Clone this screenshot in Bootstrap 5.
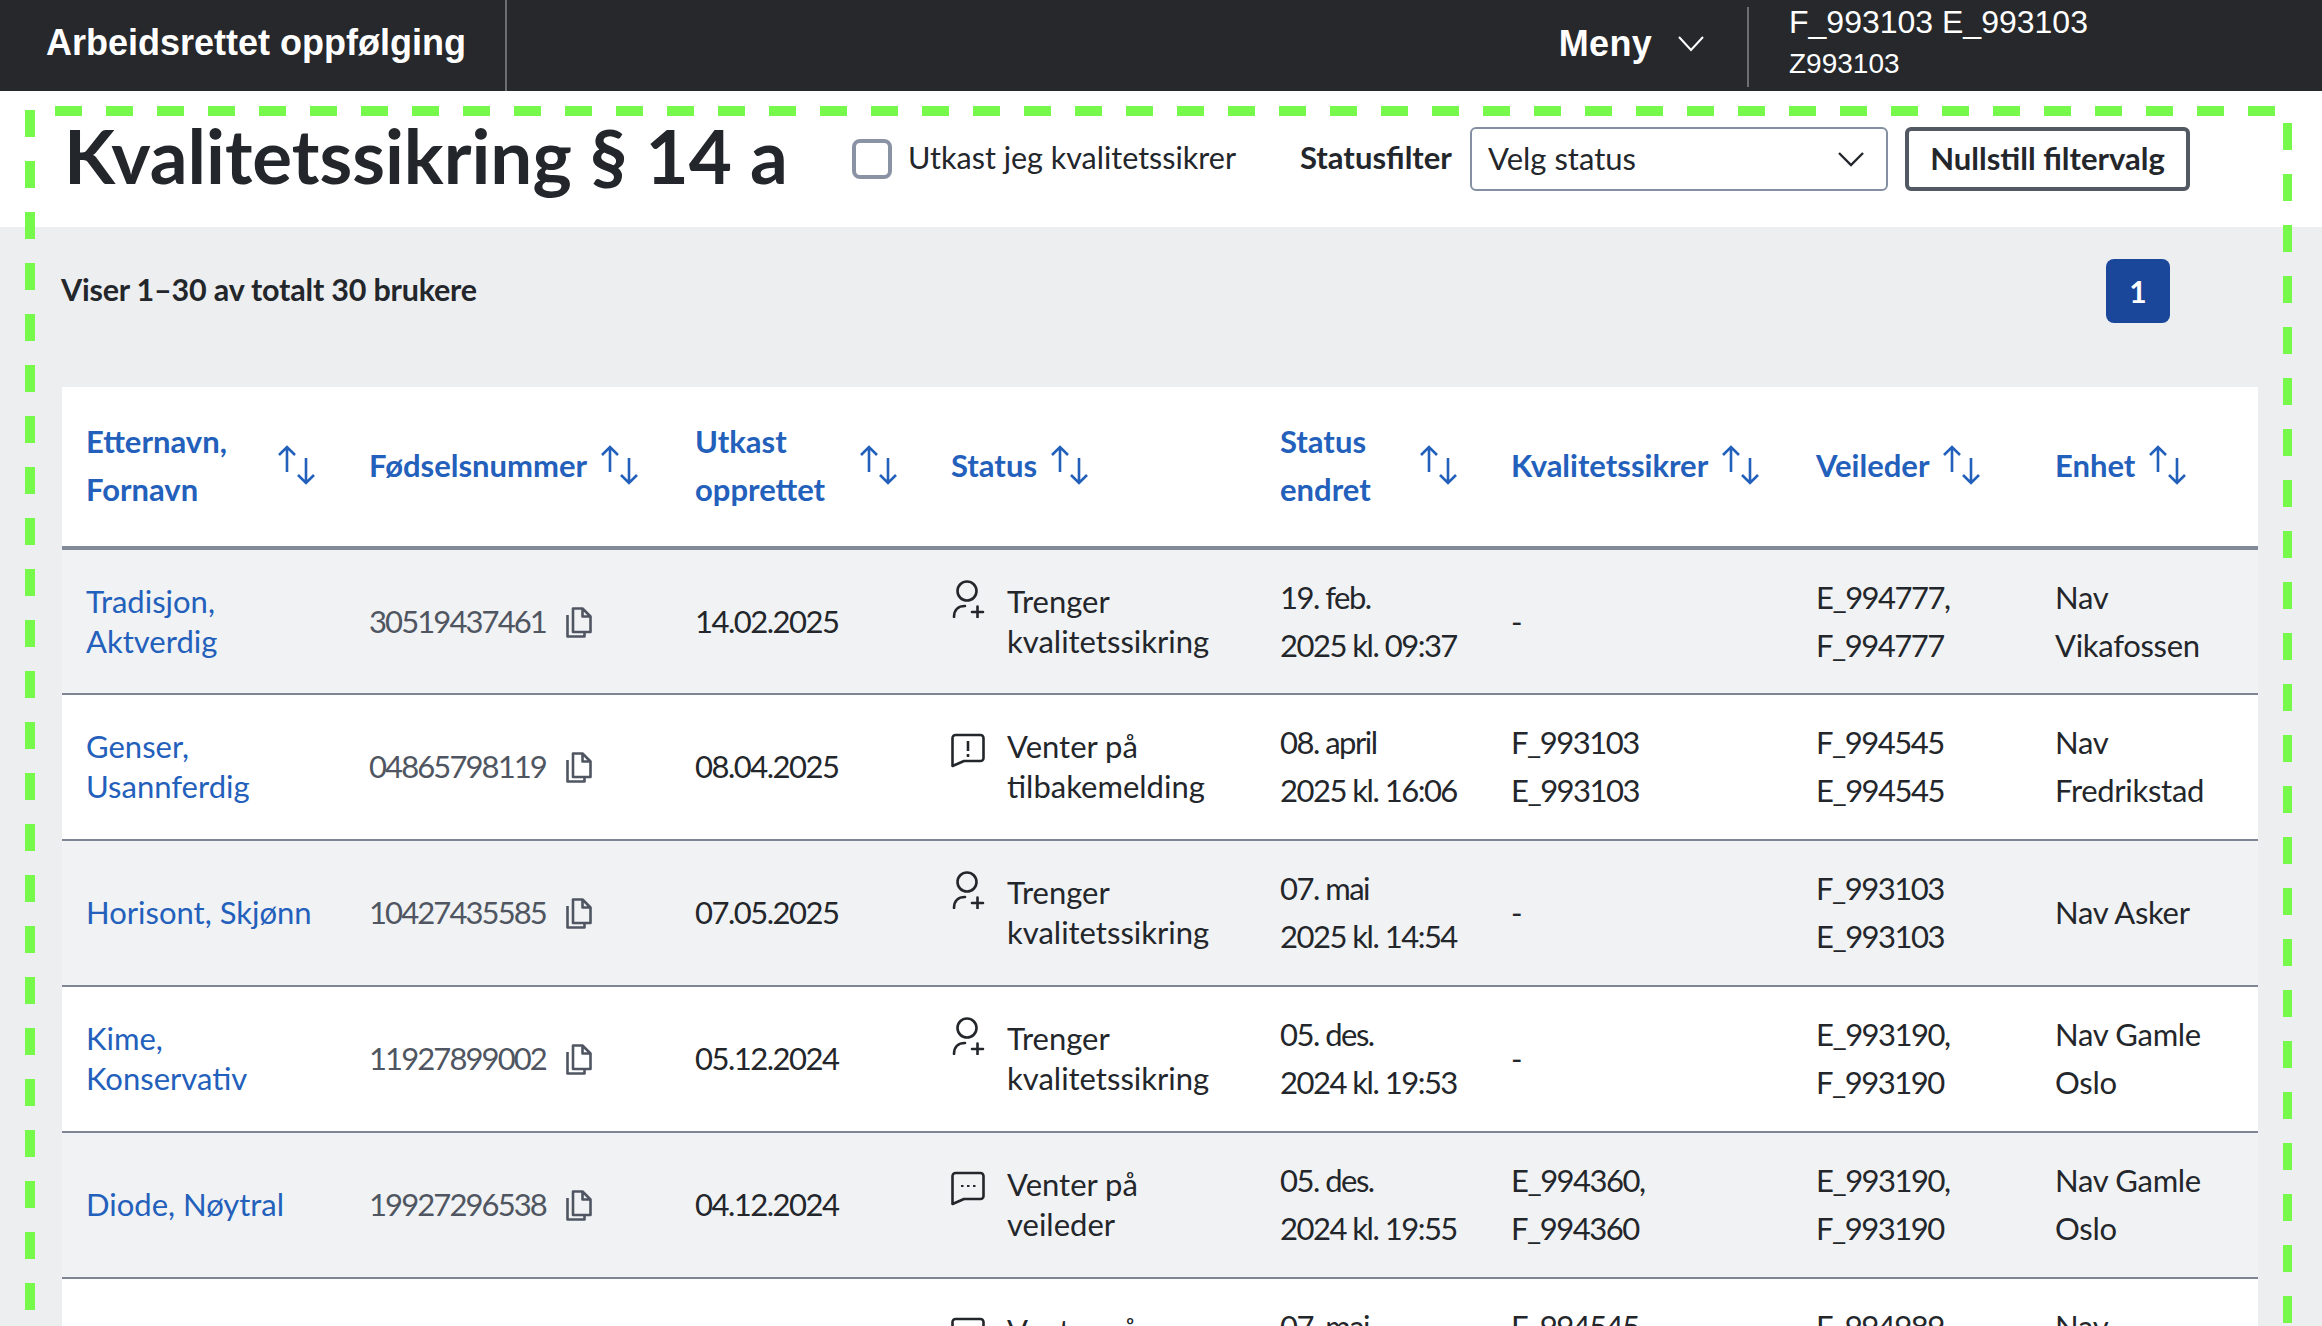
<!DOCTYPE html>
<html lang="no">
<head>
  <meta charset="UTF-8" />
  <meta name="viewport" content="width=device-width, initial-scale=1.0"/>
  <title>Kvalitetssikring § 14 a</title>
  <link href="https://cdn.jsdelivr.net/npm/bootstrap@5.3.0/dist/css/bootstrap.min.css" rel="stylesheet" />
  <style>
    html, body { height: 100%; overflow: hidden; }
    body { font-family: "Lato", "Noto Sans", sans-serif; font-size: 32px; color: #23262a; background: #edeef0; position: relative; }
    .topbar { height: 91px; background: #26282c; color: #fff; padding: 0; font-family: "Liberation Sans", Arial, sans-serif; flex-wrap: nowrap; }
    .app-name { width: 507px; height: 91px; border-right: 2px solid #6b6e73; padding-left: 46px; font-size: 36px; font-weight: 700; color: #fff; margin: 0; line-height: 85px; }
    .menu-btn { font-size: 36px; font-weight: 700; gap: 26px; margin-right: 43px; margin-top: -3px; letter-spacing: .3px; }
    .user-box { width: 575px; height: 80px; align-self: flex-start; margin-top: 3px; border-left: 2px solid #6b6e73; padding-left: 40px; }
    .user-name { font-size: 32px; line-height: 38px; margin-top: -4px; }
    .user-id { font-size: 28px; line-height: 40px; margin-top: 3px; }
    .filter-head { height: 136px; background: #fff; padding: 32px 0 0 64px; }
    .filter-head h1 { width: 788px; font-size: 74.5px; font-weight: 700; margin: 0; line-height: 64px; flex: none; }
    .draft-box { width: 448px; height: 64px; flex: none; margin-top: 4px; }
    .form-check-input.draft-check { width: 40px; height: 40px; margin: 0 16px 0 0; border: 4px solid #8a93a3; border-radius: 8px; flex: none; }
    .draft-label { font-size: 30.5px; margin-top: -3px; }
    .status-label { width: 170px; flex: none; height: 64px; line-height: 60px; font-weight: 700; font-size: 31px; margin-top: 4px; }
    .form-select.status-select { width: 418px; height: 64px; margin-top: 4px; flex: none; font-size: 31px; color: #23262a; border: 2px solid #8490a1; border-radius: 6px; padding: 0 16px 2px;
      background-image: url("data:image/svg+xml,%3csvg xmlns='http://www.w3.org/2000/svg' viewBox='0 0 26 16' fill='none' stroke='%2323262a' stroke-width='2.4'%3e%3cpath d='M1 2l12 12L25 2'/%3e%3c/svg%3e");
      background-size: 26px 16px; background-position: right 22px center; }
    .reset-btn { height: 64px; width: 285px; margin: 4px 0 0 17px; flex: none; font-size: 31px; font-weight: 700; color: #23262a; border: 4px solid #525962; border-radius: 6px; padding: 0 0 2px; background: #fff; white-space: nowrap; }
    .list-head { height: 160px; padding: 32px 152px 0 61px; }
    .list-count { font-weight: 700; font-size: 30.5px; letter-spacing: -.2px; }
    .pagination .page-link.pager-now { width: 64px; height: 64px; padding: 0; line-height: 64px; text-align: center; background: #1a4799; border: 0; border-radius: 8px; color: #fff; font-weight: 700; font-size: 30px; }
    .user-list { margin: 0 64px 0 62px; width: 2196px; table-layout: fixed; font-size: 31px; --bs-table-bg: #fff; }
    .user-list col.c1 { width: 283px; } .user-list col.c2 { width: 326px; } .user-list col.c3 { width: 256px; }
    .user-list col.c4 { width: 329px; } .user-list col.c5 { width: 231px; } .user-list col.c6 { width: 305px; }
    .user-list col.c7 { width: 239px; } .user-list col.c8 { width: 227px; }
    .user-list thead th { height: 161px; padding: 0 24px 4px; border-bottom: 4px solid #828a99; color: #2360bb; font-weight: 700; line-height: 48px; vertical-align: middle; }
    .user-list tbody td { height: 146px; padding: 0 24px 2px; border-bottom: 2px solid #7e8695; vertical-align: middle; line-height: 48px; color: #23262a; white-space: nowrap; }
    .user-list tbody tr:nth-child(odd) td { background: #f1f2f4; }
    .user-list tbody td.num { letter-spacing: -1.5px; }
    .user-list tbody td:last-child { letter-spacing: -.3px; }
    .user-list a { color: #2360bb; text-decoration: none; display: block; line-height: 40px; }
    .sort-head { display: flex; align-items: center; justify-content: space-between; }
    .sort-head.tight { justify-content: flex-start; gap: 13px; }
    .sort-head:not(.tight) .sort-icon { margin-right: 4px; }
    .sort-icon { width: 40px; height: 40px; flex: none; }
    .fnr { color: #4f5661; letter-spacing: -1.9px; }
    .copy-icon { width: 26px; height: 31px; margin-left: 20px; vertical-align: -5px; }
    .status-cell { display: flex; gap: 22px; line-height: 40px; }
    .status-icon { width: 34px; flex: none; }
    .status-icon.plus { height: 38px; margin-top: -1px; }
    .status-icon.bubble { height: 35px; margin-top: 7px; }
    /* the dashed green frame drawn on top of the screenshot */
    .dash-frame { position: absolute; pointer-events: none; }
    .dash-top { left: 55px; top: 106px; width: 2221px; height: 10px; background-image: repeating-linear-gradient(90deg, #76f94b 0 27px, transparent 27px 51px); }
    .dash-left { left: 25px; top: 110px; width: 10px; height: 1216px; background-image: repeating-linear-gradient(180deg, #76f94b 0 27px, transparent 27px 51px); }
    .dash-right { left: 2283px; top: 123px; width: 9px; height: 1203px; background-image: repeating-linear-gradient(180deg, #76f94b 0 27px, transparent 27px 51px); }
  </style>
</head>
<body>

<!-- Top bar -->
<nav class="navbar topbar justify-content-between">
  <div class="app-name">Arbeidsrettet oppfølging</div>
  <div class="d-flex align-items-center">
    <div class="d-flex align-items-center menu-btn">Meny
      <svg width="26" height="18" viewBox="0 0 26 18" fill="none" stroke="#fff" stroke-width="2"><path d="M1 2l12 13L25 2"/></svg>
    </div>
    <div class="user-box">
      <div class="user-name">F_993103 E_993103</div>
      <div class="user-id">Z993103</div>
    </div>
  </div>
</nav>

<!-- Filters -->
<div class="filter-head d-flex align-items-start">
  <h1>Kvalitetssikring § 14 a</h1>
  <div class="d-flex align-items-center draft-box">
    <input class="form-check-input draft-check" type="checkbox" id="draftCheck"/>
    <label class="draft-label" for="draftCheck">Utkast jeg kvalitetssikrer</label>
  </div>
  <label class="status-label" for="statusSelect">Statusfilter</label>
  <select class="form-select status-select" id="statusSelect"><option>Velg status</option></select>
  <button class="btn reset-btn" type="button">Nullstill filtervalg</button>
</div>

<!-- List header -->
<div class="list-head d-flex justify-content-between align-items-start">
  <div class="list-count pt-2">Viser 1–30 av totalt 30 brukere</div>
  <ul class="pagination m-0"><li class="page-item"><a class="page-link pager-now" href="#">1</a></li></ul>
</div>

<table class="table user-list">
  <colgroup><col class="c1"/><col class="c2"/><col class="c3"/><col class="c4"/><col class="c5"/><col class="c6"/><col class="c7"/><col class="c8"/></colgroup>
  <thead id="listHead"></thead>
  <tbody id="listBody"></tbody>
</table>

<div class="dash-frame dash-top"></div>
<div class="dash-frame dash-left"></div>
<div class="dash-frame dash-right"></div>

<script>
const sortIcon = '<svg class="sort-icon" viewBox="0 0 40 40" fill="none" stroke="#2360bb" stroke-width="2.6"><path d="M10 27V2M2 10l8-8 8 8M29 38V13M21 30l8 8 8-8"/></svg>';
const copyIcon = '<svg class="copy-icon" viewBox="0 0 26 31" fill="none" stroke="#4f5661" stroke-width="2.6" stroke-linejoin="round"><path d="M7 1.5h9.5l8 8v15.500H7zM16.500 1.500v8h8M1.500 8v21.500h17V26"/></svg>';
const icons = {
  plus: '<svg class="status-icon plus" viewBox="0 0 34 38" fill="none" stroke="#23262a" stroke-width="2.6" stroke-linecap="round"><circle cx="16" cy="11" r="9.5"/><path d="M3 37c0-7 4-11 11-11M21 32h11M26.500 26.500v11"/></svg>',
  alert: '<svg class="status-icon bubble" viewBox="0 0 34 35" fill="none" stroke="#23262a" stroke-width="2.6" stroke-linejoin="round"><path d="M1.500 5a3 3 0 0 1 3-3h25a3 3 0 0 1 3 3v20a3 3 0 0 1-3 3H13L1.500 33z"/><path d="M17 8v10M17 21v3"/></svg>',
  dots: '<svg class="status-icon bubble" viewBox="0 0 34 35" fill="none" stroke="#23262a" stroke-width="2.6" stroke-linejoin="round"><path d="M1.500 5a3 3 0 0 1 3-3h25a3 3 0 0 1 3 3v20a3 3 0 0 1-3 3H13L1.500 33z"/><path d="M10 15h2.500M16 15h2.500M22 15h2.500" stroke-width="2"/></svg>'
};

const headers = [
  ["Etternavn,<br>Fornavn", false], ["Fødselsnummer", true], ["Utkast<br>opprettet", false], ["Status", true],
  ["Status<br>endret", false], ["Kvalitetssikrer", true], ["Veileder", true], ["Enhet", true]
];
document.getElementById("listHead").innerHTML = "<tr>" + headers.map(h =>
  `<th><div class="sort-head ${h[1] ? "tight" : ""}"><span>${h[0]}</span>${sortIcon}</div></th>`).join("") + "</tr>";

const rows = [
  ["Tradisjon,<br>Aktverdig", "30519437461", "14.02.2025", "plus", "Trenger<br>kvalitetssikring", "19. feb.<br>2025 kl. 09:37", "-", "E_994777,<br>F_994777", "Nav<br>Vikafossen"],
  ["Genser,<br>Usannferdig", "04865798119", "08.04.2025", "alert", "Venter på<br>tilbakemelding", "08. april<br>2025 kl. 16:06", "F_993103<br>E_993103", "F_994545<br>E_994545", "Nav<br>Fredrikstad"],
  ["Horisont, Skjønn", "10427435585", "07.05.2025", "plus", "Trenger<br>kvalitetssikring", "07. mai<br>2025 kl. 14:54", "-", "F_993103<br>E_993103", "Nav Asker"],
  ["Kime,<br>Konservativ", "11927899002", "05.12.2024", "plus", "Trenger<br>kvalitetssikring", "05. des.<br>2024 kl. 19:53", "-", "E_993190,<br>F_993190", "Nav Gamle<br>Oslo"],
  ["Diode, Nøytral", "19927296538", "04.12.2024", "dots", "Venter på<br>veileder", "05. des.<br>2024 kl. 19:55", "E_994360,<br>F_994360", "E_993190,<br>F_993190", "Nav Gamle<br>Oslo"],
  ["", "", "", "dots", "Venter på<br>veileder", "07. mai<br>2025 kl. 10:12", "F_994545<br>E_994545", "F_994989<br>E_994989", "Nav<br>Fredrikstad"]
];
document.getElementById("listBody").innerHTML = rows.map(r => `<tr>
  <td><a href="#">${r[0]}</a></td>
  <td class="num">${r[1] ? `<span class="fnr">${r[1]}</span>${copyIcon}` : ""}</td>
  <td class="num">${r[2]}</td>
  <td><div class="status-cell">${icons[r[3]]}<span>${r[4]}</span></div></td>
  <td class="num">${r[5]}</td><td class="num">${r[6]}</td><td class="num">${r[7]}</td><td>${r[8]}</td>
</tr>`).join("");
</script>

<script src="https://cdn.jsdelivr.net/npm/bootstrap@5.3.0/dist/js/bootstrap.bundle.min.js"></script>
</body>
</html>
